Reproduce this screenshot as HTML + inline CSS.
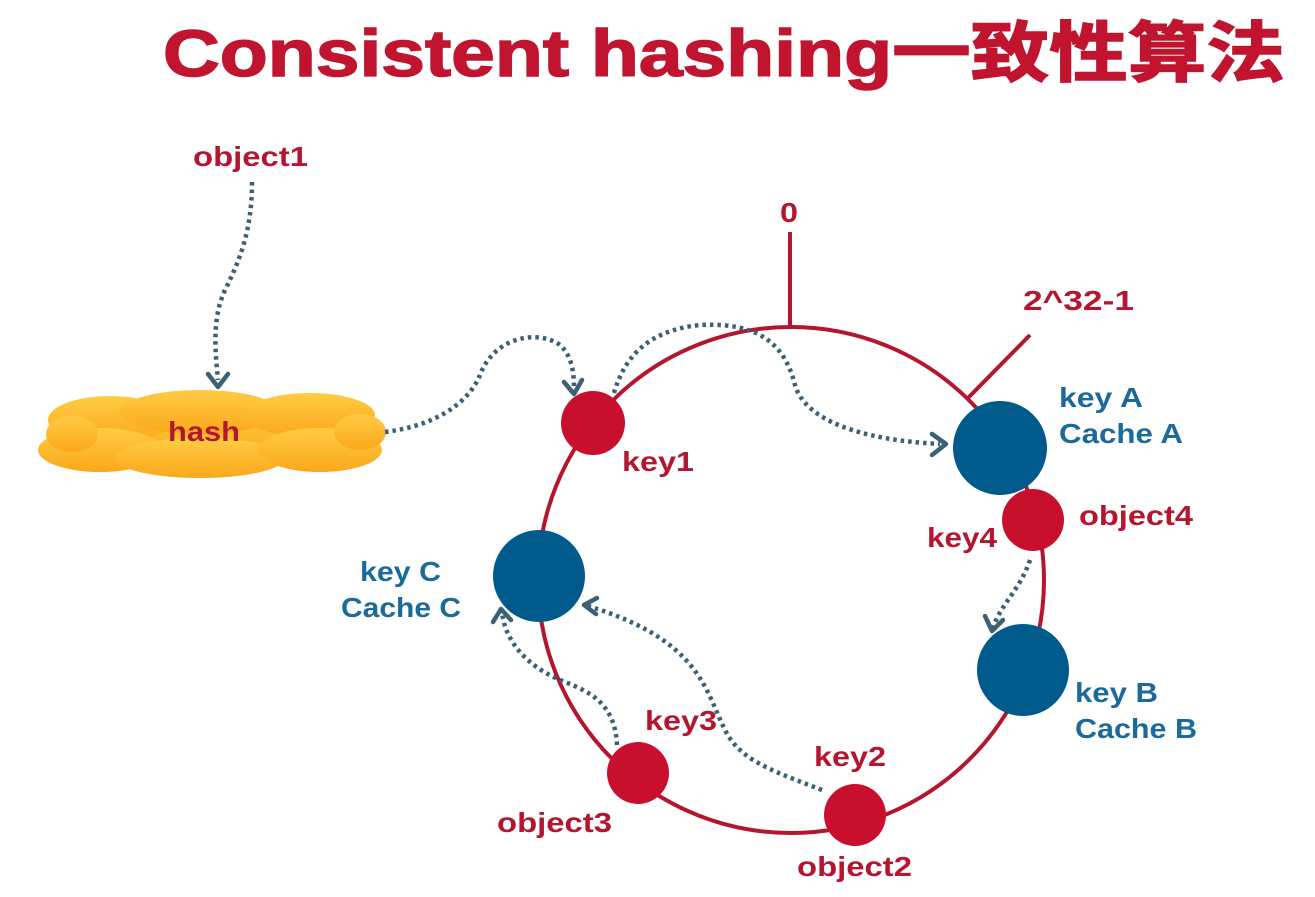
<!DOCTYPE html>
<html><head><meta charset="utf-8"><style>
html,body{margin:0;padding:0;background:#fff;width:1315px;height:897px;overflow:hidden}
svg{display:block}
text{font-family:"Liberation Sans","Noto Sans CJK SC",sans-serif;font-weight:bold}
.r{fill:#b5162f;font-size:28px}
.b{fill:#1b6a9a;font-size:28px}
.d{fill:none;stroke:#3b6174;stroke-width:4.5;stroke-dasharray:3.5 4}
.a{fill:none;stroke:#3b6174;stroke-width:4.5;stroke-linecap:round;stroke-linejoin:round}
</style></head><body>
<svg width="1315" height="897" viewBox="0 0 1315 897">
<defs>
<linearGradient id="g" x1="0" y1="0" x2="0" y2="1">
<stop offset="0" stop-color="#ffcc44"/><stop offset="1" stop-color="#fba81a"/></linearGradient>
</defs>
<text x="163" y="76" fill="#c0142f" font-size="66" font-weight="bold" textLength="1122" lengthAdjust="spacingAndGlyphs" stroke="#c0142f" stroke-width="1.5">Consistent hashing一致性算法</text>
<circle cx="791" cy="580" r="253" fill="none" stroke="#b5162f" stroke-width="4"/>
<line x1="790" y1="232" x2="790" y2="328" stroke="#b5162f" stroke-width="4"/>
<line x1="968" y1="398" x2="1030" y2="335" stroke="#b5162f" stroke-width="4"/>
<text x="780" y="222" class="r" textLength="18" lengthAdjust="spacingAndGlyphs">0</text>
<text x="1023" y="310" class="r" textLength="111" lengthAdjust="spacingAndGlyphs">2^32-1</text>
<g fill="url(#g)">
<rect x="70" y="410" width="295" height="52" rx="26"/>
<ellipse cx="110" cy="420" rx="62" ry="24"/>
<ellipse cx="200" cy="412" rx="80" ry="22"/>
<ellipse cx="310" cy="415" rx="65" ry="22"/>
<ellipse cx="100" cy="450" rx="62" ry="22"/>
<ellipse cx="200" cy="458" rx="85" ry="20"/>
<ellipse cx="320" cy="450" rx="62" ry="22"/>
<ellipse cx="360" cy="432" rx="26" ry="18"/>
<ellipse cx="72" cy="434" rx="26" ry="18"/>
</g>
<text x="168" y="441" class="r" textLength="72" lengthAdjust="spacingAndGlyphs">hash</text>
<text x="193" y="166" class="r" textLength="115" lengthAdjust="spacingAndGlyphs">object1</text>
<path class="d" d="M252 182 C252 230 240 260 225 290 C212 318 215 350 218 380"/>
<path class="a" d="M208 374 L218 387 L228 374"/>
<path class="d" d="M385 432 C440 425 470 400 480 375 C495 335 540 330 560 345 C572 356 574 372 574 390"/>
<path class="a" d="M564 382 L574 394 L582 380"/>
<path class="d" d="M614 393 C625 355 650 330 700 325 C760 322 785 345 795 385 C805 420 860 440 940 444"/>
<path class="a" d="M932 434 L946 444 L932 455"/>
<path class="d" d="M1030 560 C1020 590 1000 605 993 628"/>
<path class="a" d="M985 616 L992 631 L1003 620"/>
<path class="d" d="M822 790 C770 770 740 760 725 730 C705 690 700 640 588 606"/>
<path class="a" d="M597 598 L584 605 L596 614"/>
<path class="d" d="M617 745 C615 700 585 690 560 680 C525 665 505 640 502 612"/>
<path class="a" d="M493 622 L501 609 L511 620"/>
<circle cx="593" cy="423" r="32" fill="#c8102e"/>
<circle cx="1000" cy="448" r="47" fill="#005b8c"/>
<circle cx="1033" cy="520" r="31" fill="#c8102e"/>
<circle cx="1023" cy="670" r="46" fill="#005b8c"/>
<circle cx="855" cy="815" r="31" fill="#c8102e"/>
<circle cx="638" cy="773" r="31" fill="#c8102e"/>
<circle cx="539" cy="576" r="46" fill="#005b8c"/>
<text x="622" y="471" class="r" textLength="72" lengthAdjust="spacingAndGlyphs">key1</text>
<text x="1059" y="407" class="b" textLength="84" lengthAdjust="spacingAndGlyphs">key A</text>
<text x="1059" y="443" class="b" textLength="124" lengthAdjust="spacingAndGlyphs">Cache A</text>
<text x="927" y="547" class="r" textLength="70" lengthAdjust="spacingAndGlyphs">key4</text>
<text x="1079" y="525" class="r" textLength="114" lengthAdjust="spacingAndGlyphs">object4</text>
<text x="1075" y="702" class="b" textLength="83" lengthAdjust="spacingAndGlyphs">key B</text>
<text x="1075" y="738" class="b" textLength="122" lengthAdjust="spacingAndGlyphs">Cache B</text>
<text x="360" y="581" class="b" textLength="81" lengthAdjust="spacingAndGlyphs">key C</text>
<text x="341" y="617" class="b" textLength="120" lengthAdjust="spacingAndGlyphs">Cache C</text>
<text x="645" y="730" class="r" textLength="72" lengthAdjust="spacingAndGlyphs">key3</text>
<text x="814" y="766" class="r" textLength="72" lengthAdjust="spacingAndGlyphs">key2</text>
<text x="497" y="832" class="r" textLength="115" lengthAdjust="spacingAndGlyphs">object3</text>
<text x="797" y="876" class="r" textLength="115" lengthAdjust="spacingAndGlyphs">object2</text>
</svg>
</body></html>
